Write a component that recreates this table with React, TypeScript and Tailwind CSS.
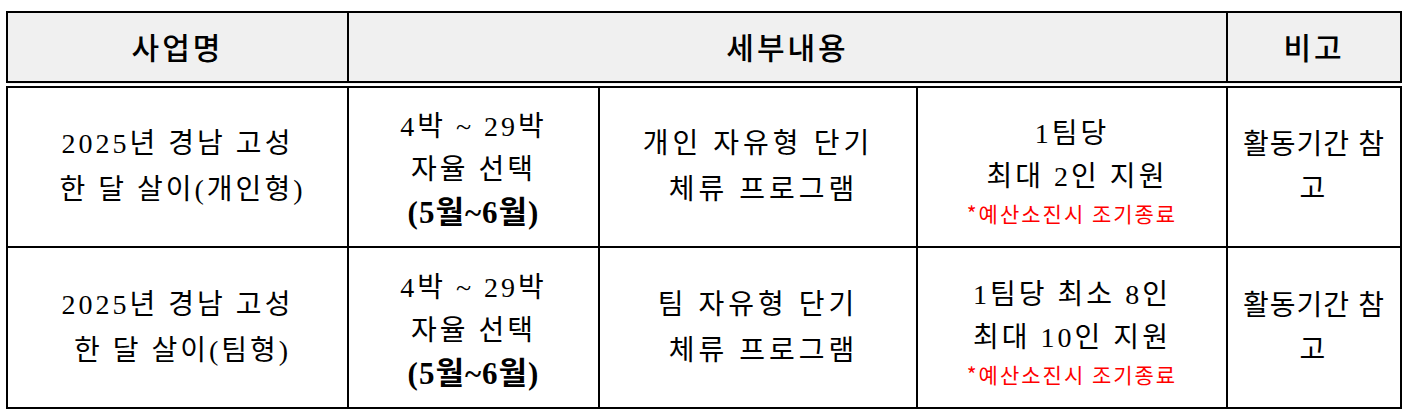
import * as React from "react"

const serif = "font-['Liberation_Serif','Noto_Sans_CJK_KR',serif]"
const sans = "font-['Noto_Sans_CJK_KR','Liberation_Sans',sans-serif]"

const rows = [
  {
    name: ["2025년 경남 고성", " 한 달 살이(개인형)"],
    detail: ["개인 자유형 단기", " 체류 프로그램"],
    support: ["1팀당", " 최대 2인 지원"],
  },
  {
    name: ["2025년 경남 고성", " 한 달 살이(팀형)"],
    detail: ["팀 자유형 단기", " 체류 프로그램"],
    support: ["1팀당 최소 8인", "최대 10인 지원"],
  },
]

export default function App() {
  const th = `border-2 border-black border-b-[7px] border-double bg-[#f0f0f0] text-[30px] font-medium tracking-[3px] text-black ${sans}`
  const td = `border-2 border-black text-center align-middle text-[28px] tracking-[3px] text-black ${serif}`

  return (
    <div className="min-h-[413px] w-[1407px] bg-white pl-[6px] pt-[11px]">
      <table className="w-[1394px] table-fixed border-collapse border-2 border-black">
        <colgroup>
          <col className="w-[341px]" />
          <col className="w-[251px]" />
          <col className="w-[318px]" />
          <col className="w-[310px]" />
          <col className="w-[174px]" />
        </colgroup>
        <thead>
          <tr className="h-[72px]">
            <th className={th}>사업명</th>
            <th className={th} colSpan={3}>
              세부내용
            </th>
            <th className={th}>비고</th>
          </tr>
        </thead>
        <tbody>
          {rows.map((row, i) => (
            <tr key={i} className={i === 0 ? "h-[163px]" : "h-[161px]"}>
              <td className={td}>
                {row.name.map((line, j) => (
                  <div key={j} className="whitespace-pre leading-[46px]">
                    {line}
                  </div>
                ))}
              </td>
              <td className={td}>
                <div className="pt-[6px]">
                  <div className="leading-[43px]">4박 ~ 29박</div>
                  <div className="leading-[43px]">자율 선택</div>
                  <div className="text-[31px] font-bold leading-[43px] tracking-[1px]">(5월~6월)</div>
                </div>
              </td>
              <td className={`${td} tracking-[4px]`}>
                {row.detail.map((line, j) => (
                  <div key={j} className="whitespace-pre leading-[46px]">
                    {line}
                  </div>
                ))}
              </td>
              <td className={td}>
                <div className="pt-[6px]">
                  {row.support.map((line, j) => (
                    <div key={j} className="whitespace-pre leading-[43px]">
                      {line}
                    </div>
                  ))}
                  <div className={`text-[21px] leading-[30px] tracking-[2px] text-[#ff0000] ${sans}`}>
                    *예산소진시 조기종료
                  </div>
                </div>
              </td>
              <td className={td}>
                <div className="leading-[44px] tracking-[1px]">활동기간 참</div>
                <div className="leading-[44px]">고</div>
              </td>
            </tr>
          ))}
        </tbody>
      </table>
    </div>
  )
}
